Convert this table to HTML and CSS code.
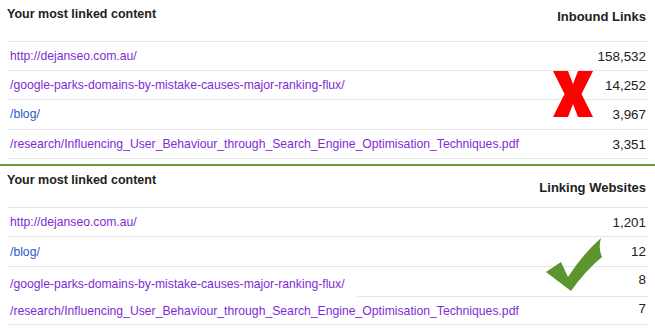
FILE: index.html
```html
<!DOCTYPE html>
<html>
<head>
<meta charset="utf-8">
<link rel="stylesheet" href="styles.css">
</head>
<body>
<div class="page">
  <section class="panel">
    <div class="head">
      <div class="title">Your most linked content</div>
      <div class="colhead colhead-top">Inbound Links</div>
    </div>
    <div class="row r29"><a class="v" href="#">http://dejanseo.com.au/</a><span class="num">158,532</span></div>
    <div class="row r29"><a class="v" href="#">/google-parks-domains-by-mistake-causes-major-ranking-flux/</a><span class="num">14,252</span></div>
    <div class="row r30"><a class="b" href="#">/blog/</a><span class="num">3,967</span></div>
    <div class="row r29 last"><a class="v" href="#">/research/Influencing_User_Behaviour_through_Search_Engine_Optimisation_Techniques.pdf</a><span class="num">3,351</span></div>
    <svg class="mark-x" viewBox="0 0 40 46" width="40" height="46"><polygon points="0,0 15,0 20,13 25,0 40,0 28.5,23 40,46 25,46 20,33 15,46 0,46 11.5,23" fill="#ff0000"/></svg>
  </section>
  <div class="divider"></div>
  <section class="panel">
    <div class="head">
      <div class="title">Your most linked content</div>
      <div class="colhead colhead-bot">Linking Websites</div>
    </div>
    <div class="row r29"><a class="v" href="#">http://dejanseo.com.au/</a><span class="num">1,201</span></div>
    <div class="row r30 shift-b"><a class="b" href="#">/blog/</a><span class="num">12</span></div>
    <div class="row r29 shift-g"><a class="v" href="#">/google-parks-domains-by-mistake-causes-major-ranking-flux/</a><span class="num">8</span></div>
    <div class="row r29 last part"><a class="v" href="#">/research/Influencing_User_Behaviour_through_Search_Engine_Optimisation_Techniques.pdf</a><span class="num">7</span></div>
    <svg class="mark-check" viewBox="0 0 57 55" width="57" height="55"><path d="M0,34 L15,24 L22,39 Q36,17 55,0 Q52,10 56,19 Q40,32 25,53 Z" fill="#5c9530"/></svg>
  </section>
</div>
</body>
</html>
```
FILE: styles.css
```css
html, body {
  margin: 0;
  padding: 0;
  background: #ffffff;
}
body {
  font-family: "Liberation Sans", Arial, sans-serif;
  font-size: 13px;
  color: #222222;
}
.page {
  width: 655px;
  height: 330px;
  overflow: hidden;
}
.panel {
  position: relative;
  padding: 0 6px 0 7px;
}
.head {
  display: flex;
  justify-content: space-between;
  align-items: flex-start;
  height: 41px;
}
.title {
  font-weight: bold;
  font-size: 12.5px;
  padding-top: 7px;
  line-height: 15px;
}
.colhead {
  font-weight: bold;
  line-height: 15px;
  padding-right: 3px;
}
.colhead-top { padding-top: 9px; }
.colhead-bot { padding-top: 14px; }
.row {
  display: flex;
  justify-content: space-between;
  align-items: center;
  box-sizing: border-box;
  border-top: 1px solid #e6e6e6;
  padding: 0 3px;
  line-height: 15px;
}
.r29 { height: 29px; }
.r30 { height: 30px; }
.row.last { border-bottom: 1px solid #e6e6e6; height: 30px; }
a {
  text-decoration: none;
  font-size: 12.2px;
}
a.v { color: #7f2bd6; }
a.b { color: #2a5cc9; }
.num {
  color: #222222;
  font-size: 13.4px;
}
.shift-b a { position: relative; top: 1px; }
.shift-g a { position: relative; top: 3px; }
.shift-g .num { position: relative; top: -2px; }
.part {
  border-top-color: transparent;
  background: linear-gradient(#e6e6e6, #e6e6e6) no-repeat right top / 292px 1px;
}
.part a { position: relative; top: 1px; }
.part .num { position: relative; top: -2px; }
.divider {
  height: 2px;
  background: #6b9b37;
  margin-top: 5px;
}
.mark-x {
  position: absolute;
  left: 553px;
  top: 71px;
}
.mark-check {
  position: absolute;
  left: 546px;
  top: 72px;
}
```
